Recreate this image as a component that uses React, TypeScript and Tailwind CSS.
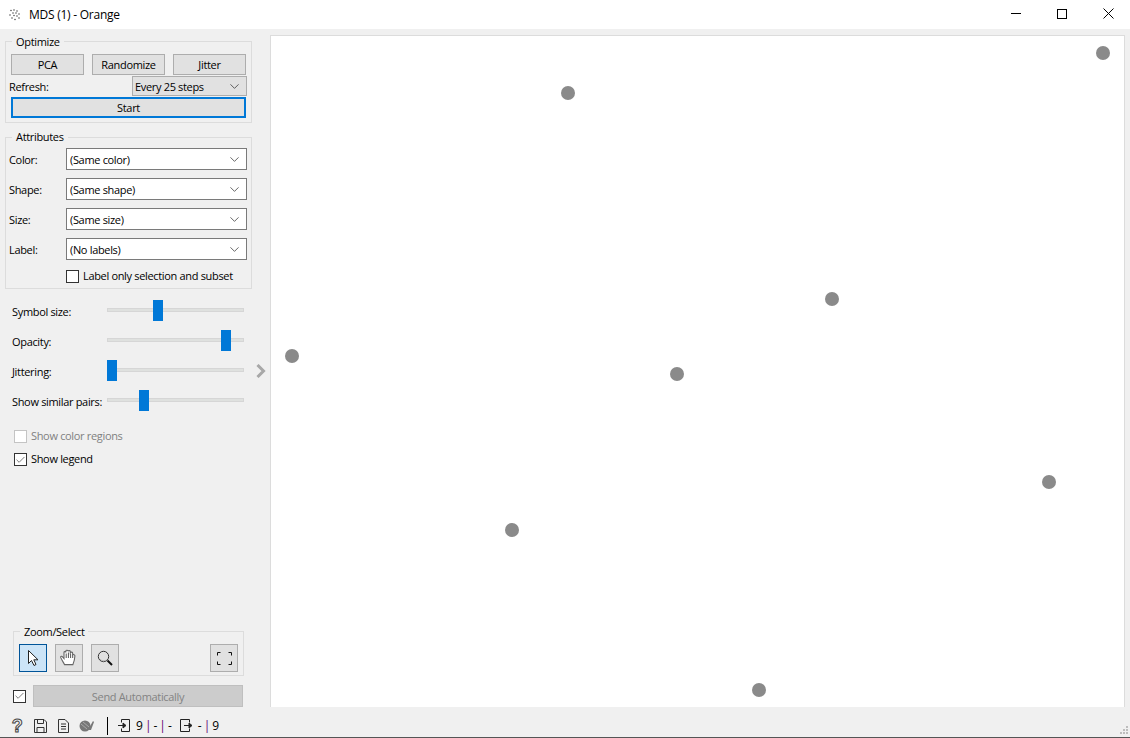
import React from 'react';
import { ChevronDown, Check } from 'lucide-react';

const points = [
  [832, 17],
  [297, 57],
  [561, 263],
  [21, 320],
  [406, 338],
  [778, 446],
  [241, 494],
  [488, 654],
];

const Group: React.FC<{ title: string; className: string; inner: string; nudge?: boolean; children: React.ReactNode }> = ({ title, className, inner, nudge = true, children }) => (
  <fieldset className={`border border-[#dcdcdc] ${className}`}>
    <legend className="ml-[6px] px-[4px] leading-[14px]">
      <span className={nudge ? 'block translate-y-px' : 'block'}>{title}</span>
    </legend>
    <div className={inner}>{children}</div>
  </fieldset>
);

const Btn: React.FC<{ label: string }> = ({ label }) => (
  <div className="w-[73px] h-[21px] pt-[2px] bg-[#e1e1e1] border border-[#adadad] flex items-center justify-center">{label}</div>
);

const Combo: React.FC<{ label: string; value: string }> = ({ label, value }) => (
  <div className="flex items-center h-[22px] mb-[8px]">
    <span className="w-[57px] shrink-0 pt-[2px]">{label}</span>
    <div className="w-[181px] h-[22px] bg-white border border-[#7a7a7a] flex items-center justify-between pl-[3px] pr-[4px]">
      <span className="pt-[2px]">{value}</span>
      <ChevronDown size={15} strokeWidth={1.1} className="text-[#222]" />
    </div>
  </div>
);

const Slider: React.FC<{ label: string; offset: string }> = ({ label, offset }) => (
  <div className="flex items-center h-[21px] mb-[9px]">
    <span className="w-[95px] shrink-0 whitespace-nowrap pt-[4px]">{label}</span>
    <div className="relative w-[137px] h-[21px] flex items-center">
      <div className="w-full h-[4px] bg-[#dfe1df] border border-[#d6d6d6] -mt-px" />
      <div className={`absolute top-0 w-[10px] h-[21px] bg-[#0078d7] ${offset}`} />
    </div>
  </div>
);

const CheckBox: React.FC<{ checked?: boolean; disabled?: boolean }> = ({ checked, disabled }) => (
  <div className={`w-[13px] h-[13px] shrink-0 flex items-center justify-center bg-white border ${disabled ? 'border-[#c4c4c4]' : 'border-[#333]'}`}>
    {checked && <Check size={12} strokeWidth={1.4} className="text-[#333]" />}
  </div>
);

const ToolBtn: React.FC<{ active?: boolean; className?: string; children: React.ReactNode }> = ({ active, className, children }) => (
  <div className={`w-[28px] h-[28px] flex items-center justify-center border ${active ? 'bg-[#cce4f7] border-[#005499]' : 'bg-[#e1e1e1] border-[#adadad]'} ${className ?? ''}`}>
    {children}
  </div>
);

function App() {
  return (
    <div className="w-[1130px] h-[738px] flex flex-col overflow-hidden bg-[#f0f0f0] text-[11px] tracking-[-0.33px] text-black font-['Open_Sans',sans-serif]">
      {/* Title bar */}
      <div className="h-[29px] bg-white flex items-center shrink-0 relative">
        <svg width="12" height="12" viewBox="0 0 12 12" className="ml-[9px] mr-[8px]" fill="#555">
          <circle cx="2" cy="1.5" r="0.8" /><circle cx="5" cy="1" r="0.8" /><circle cx="8" cy="2" r="0.8" />
          <circle cx="4" cy="4" r="0.8" /><circle cx="7" cy="4" r="0.8" /><circle cx="10" cy="5" r="0.8" />
          <circle cx="1" cy="6" r="0.8" /><circle cx="5" cy="6.5" r="0.8" /><circle cx="8" cy="7" r="0.8" />
          <circle cx="3" cy="9" r="0.8" /><circle cx="6" cy="10.5" r="0.8" /><circle cx="10" cy="9" r="0.8" />
        </svg>
        <span className="text-[12px] tracking-[-0.25px] leading-none">MDS (1) - Orange</span>
        <div className="ml-auto -mr-px pb-[2px] flex items-center">
          <div className="w-[46px] flex justify-center"><div className="w-[10px] h-px bg-black" /></div>
          <div className="w-[46px] flex justify-center"><div className="w-[10px] h-[10px] border border-black" /></div>
          <div className="w-[46px] flex justify-center">
            <svg width="11" height="11" viewBox="0 0 11 11" stroke="#000" strokeWidth="1"><path d="M0.5 0.5L10.5 10.5M10.5 0.5L0.5 10.5" /></svg>
          </div>
        </div>
      </div>

      {/* Body */}
      <div className="flex flex-1 min-h-0">
        <div className="w-[270px] shrink-0 flex flex-col pt-[5px] relative">
          <Group title="Optimize" className="ml-[5px] w-[247px] h-[89px]" inner="pl-[5px] pt-[6px]">
            <div className="flex gap-[8px]">
              <Btn label="PCA" /><Btn label="Randomize" /><Btn label="Jitter" />
            </div>
            <div className="flex items-center h-[20px] mt-px -ml-[2px]">
              <span className="w-[123px] pt-[2px]">Refresh:</span>
              <div className="w-[115px] h-[20px] bg-[#e1e1e1] border border-[#adadad] flex items-center justify-between pl-[2px] pr-[4px]">
                <span className="pt-[2px]">Every 25 steps</span>
                <ChevronDown size={15} strokeWidth={1.1} className="text-[#222]" />
              </div>
            </div>
            <div className="w-[235px] h-[21px] mt-px pt-[2px] bg-[#e1e1e1] border-2 border-[#0078d7] flex items-center justify-center">Start</div>
          </Group>

          <Group title="Attributes" nudge={false} className="ml-[5px] mt-[7px] w-[247px] h-[159px]" inner="pl-[3px] pt-[4px]">
            <Combo label="Color:" value="(Same color)" />
            <Combo label="Shape:" value="(Same shape)" />
            <Combo label="Size:" value="(Same size)" />
            <Combo label="Label:" value="(No labels)" />
            <div className="flex items-center gap-[4px] ml-[57px] mt-[3px]">
              <CheckBox />
              <span>Label only selection and subset</span>
            </div>
          </Group>

          <div className="ml-[12px] mt-[11px]">
            <Slider label="Symbol size:" offset="left-[46px]" />
            <Slider label="Opacity:" offset="left-[114px]" />
            <Slider label="Jittering:" offset="left-0" />
            <Slider label="Show similar pairs:" offset="left-[32px]" />
          </div>
          <svg width="10" height="14" viewBox="0 0 10 14" fill="none" stroke="#a8a8a8" strokeWidth="3" className="absolute left-[256px] top-[335px]">
            <path d="M1.5 1L7.5 7L1.5 13" />
          </svg>

          <div className="ml-[14px] mt-[10px] flex flex-col gap-[10px]">
            <div className="flex items-center gap-[4px] h-[13px] text-[#808080]">
              <CheckBox disabled /><span>Show color regions</span>
            </div>
            <div className="flex items-center gap-[4px] h-[13px]">
              <CheckBox checked /><span>Show legend</span>
            </div>
          </div>

          <Group title="Zoom/Select" className="ml-[13px] mt-auto w-[231px] h-[52px]" inner="pl-[5px] pt-[6px]">
            <div className="flex gap-[8px]">
              <ToolBtn active>
                <svg width="16" height="18" viewBox="0 0 16 18" fill="#fff" stroke="#222" strokeWidth="1"><path d="M3.5 1.5V14.5L6.5 11.5L9 16.5L11 15.5L8.8 10.8H13L3.5 1.5Z" /></svg>
              </ToolBtn>
              <ToolBtn>
                <svg width="20" height="20" viewBox="0 0 18 18" fill="#fff" stroke="#666" strokeWidth="1"><path d="M5 15C4 13 2 10 1.5 8.5C1.2 7.5 2.5 7 3.2 8L4.5 9.5V4C4.5 3 6 3 6.2 4V2.8C6.2 1.7 8 1.7 8.2 2.8V3C8.5 2 10.2 2.2 10.2 3.3V4.2C10.7 3.3 12.3 3.6 12.3 4.7V6.2C13 5.6 14.4 6 14.3 7.2C14.2 10 13.5 12.5 12.5 15Z" /><path d="M6.5 5V9M8.5 4V9M10.4 5V9M12.3 6V9" fill="none" /></svg>
              </ToolBtn>
              <ToolBtn>
                <svg width="18" height="18" viewBox="0 0 18 18" fill="none"><circle cx="7.5" cy="7.5" r="5.2" stroke="#333" strokeWidth="1" /><path d="M3.5 9.5C5 12 8 12.5 10.5 11" stroke="#aaa" strokeWidth="1" /><path d="M11.5 11.5L16 16" stroke="#111" strokeWidth="2" /></svg>
              </ToolBtn>
              <ToolBtn className="ml-auto mr-[5px]">
                <svg width="15" height="13" viewBox="0 0 15 13" fill="none" stroke="#111" strokeWidth="1"><path d="M0.5 3.5V0.5H3.5M11.5 0.5H14.5V3.5M14.5 9.5V12.5H11.5M3.5 12.5H0.5V9.5" /></svg>
              </ToolBtn>
            </div>
          </Group>

          <div className="flex items-center ml-[13px] mt-[9px] gap-[7px]">
            <CheckBox checked />
            <div className="w-[210px] h-[22px] pt-[2px] bg-[#cccccc] border border-[#bfbfbf] flex items-center justify-center text-[#838383]">Send Automatically</div>
          </div>
        </div>

        {/* Plot */}
        <div className="flex-1 mt-[6px] mr-[5px] bg-white border border-[#dcdcdc] border-b-0">
          <svg width="853" height="671" className="block">
            {points.map(([x, y]) => (
              <circle key={`${x}-${y}`} cx={x} cy={y} r="7" fill="#8a8a8a" />
            ))}
          </svg>
        </div>
      </div>

      {/* Status bar */}
      <div className="h-[31px] shrink-0 border-b border-[#555] flex items-center relative pl-[11px] pt-[7px]">
        <span className="w-[12px] text-[18px] leading-none font-bold text-[#f0f0f0] text-center font-['Liberation_Sans',sans-serif] [-webkit-text-stroke:1px_#444]">?</span>
        <svg width="13" height="14" viewBox="0 0 13 14" className="ml-[11px]" fill="none" stroke="#333"><path d="M0.5 0.5H10L12.5 3V13.5H0.5Z" /><path d="M3.5 0.5V4.5H9.5V0.5M3 13.5V8.5H10V13.5" /></svg>
        <svg width="11" height="14" viewBox="0 0 11 14" className="ml-[11px]" fill="none" stroke="#333"><path d="M0.5 0.5H7L10.5 4V13.5H0.5Z" /><path d="M3 5H8M3 7.5H8M3 10H8" /></svg>
        <svg width="15" height="13" viewBox="0 0 15 13" className="ml-[10px]" fill="#777"><circle cx="6" cy="7" r="5.5" /><path d="M10 9L14 2L15 3L12 11H3V10Z" /><path d="M2 5L8 10M4 3L10 8" stroke="#aaa" fill="none" /></svg>
        <div className="w-px h-[18px] bg-black ml-[13px]" />
        <svg width="13" height="13" viewBox="0 0 13 13" className="ml-[10px]" fill="none" stroke="#222"><path d="M3.5 3.5V0.5H11.5V12.5H3.5V9.5" /><path d="M0 6.5H7" /><path d="M5 4L8 6.5L5 9Z" fill="#222" /></svg>
        <span className="ml-[5px] text-[12px] tracking-normal flex items-center gap-[2px]">
          9<span className="text-[#600070]">|</span>-<span className="text-[#600070]">|</span>-
        </span>
        <svg width="13" height="13" viewBox="0 0 13 13" className="ml-[8px]" fill="none" stroke="#222"><path d="M9.5 3.5V0.5H0.5V12.5H9.5V9.5" /><path d="M4 6.5H10" /><path d="M9 4L12 6.5L9 9Z" fill="#222" /></svg>
        <span className="ml-[5px] text-[12px] tracking-normal flex items-center gap-[2px]">
          -<span className="text-[#600070]">|</span>9
        </span>
        <svg width="10" height="10" viewBox="0 0 10 10" className="absolute right-[1px] bottom-[1px]" fill="#bdbdbd">
          <rect x="7" y="0" width="2" height="2" /><rect x="4" y="3" width="2" height="2" /><rect x="7" y="3" width="2" height="2" /><rect x="1" y="6" width="2" height="2" /><rect x="4" y="6" width="2" height="2" /><rect x="7" y="6" width="2" height="2" />
        </svg>
      </div>
    </div>
  );
}

export default App;
